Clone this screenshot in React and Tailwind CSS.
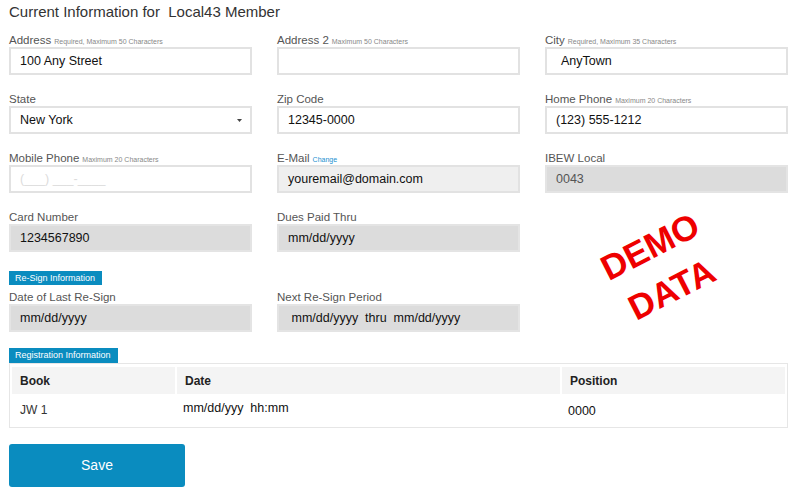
const font = { fontFamily: '"Liberation Sans", Arial, sans-serif' };

function Field({ label, hint, hintBlue, children, labelH = "h-4" }) {
    return (
        <div className="flex flex-col mb-[14px]">
            <div className={`${labelH} flex items-end leading-none text-[11.5px] text-[#555] whitespace-nowrap`}>
                <span>{label}</span>
                {hint && (
                    <span
                        className={`ml-[3px] text-[7px] mb-[1px] ${hintBlue ? "text-[#1a8fd0]" : "text-[#888]"}`}
                    >
                        {hint}
                    </span>
                )}
            </div>
            {children}
        </div>
    );
}

function Box({ children, tone = "white", className = "" }) {
    const tones = {
        white: "bg-white border-[#e2e2e2]",
        light: "bg-[#efefef] border-[#e2e2e2]",
        gray: "bg-[#dcdcdc] border-[#e4e4e4]",
    };
    return (
        <div
            className={`h-[28px] mt-[1px] border-2 flex items-center pl-[9px] text-[12.5px] text-[#111] whitespace-pre ${tones[tone]} ${className}`}
        >
            {children}
        </div>
    );
}

function Badge({ children, className = "" }) {
    return (
        <div
            className={`bg-[#0a8cbf] text-white text-[9px] leading-none whitespace-nowrap flex items-center px-[6px] ${className}`}
        >
            {children}
        </div>
    );
}

export default function App() {
    return (
        <div className="relative w-[800px] h-[499px] bg-white pl-[9px] pr-[12px]" style={font}>
            <div className="h-[30px] pt-[3px] text-[15px] leading-[18px] text-[#333] whitespace-pre">
                Current Information for  Local43 Member
            </div>

            <div className="grid grid-cols-3 gap-x-[25px]">
                <Field label="Address" hint="Required, Maximum 50 Characters">
                    <Box>100 Any Street</Box>
                </Field>
                <Field label="Address 2" hint="Maximum 50 Characters">
                    <Box />
                </Field>
                <Field label="City" hint="Required, Maximum 35 Characters">
                    <Box className="pl-[14px]">AnyTown</Box>
                </Field>

                <Field label="State">
                    <Box className="justify-between pr-[8px]">
                        <span>New York</span>
                        <svg width="5" height="3" viewBox="0 0 5 3">
                            <path d="M0 0h5L2.5 3z" fill="#444" />
                        </svg>
                    </Box>
                </Field>
                <Field label="Zip Code">
                    <Box>12345-0000</Box>
                </Field>
                <Field label="Home Phone" hint="Maximum 20 Characters">
                    <Box>(123) 555-1212</Box>
                </Field>

                <Field label="Mobile Phone" hint="Maximum 20 Characters">
                    <Box className="text-[#dcdcdc] text-[11px]">(___) ___-____</Box>
                </Field>
                <Field label="E-Mail" hint="Change" hintBlue>
                    <Box tone="light">youremail@domain.com</Box>
                </Field>
                <Field label="IBEW Local">
                    <Box tone="gray" className="text-[#555]">0043</Box>
                </Field>

                <Field label="Card Number">
                    <Box tone="gray">1234567890</Box>
                </Field>
                <Field label="Dues Paid Thru">
                    <Box tone="gray">mm/dd/yyyy</Box>
                </Field>
                <div />
            </div>

            <Badge className="w-[93px] h-[14px] mt-[5px]">Re-Sign Information</Badge>
            <div className="grid grid-cols-3 gap-x-[25px]">
                <Field label="Date of Last Re-Sign" labelH="h-[18px]">
                    <Box tone="gray">mm/dd/yyyy</Box>
                </Field>
                <Field label="Next Re-Sign Period" labelH="h-[18px]">
                    <Box tone="gray"> mm/dd/yyyy  thru  mm/dd/yyyy</Box>
                </Field>
                <div />
            </div>

            <Badge className="w-[109px] h-[15px] mt-[2px]">Registration Information</Badge>
            <div className="border border-[#e6e6e6] px-[2px] pt-[3px] pb-[1px]">
                <div className="grid grid-cols-[163px_383px_223px] gap-x-[2px]">
                    {["Book", "Date", "Position"].map((h) => (
                        <div
                            key={h}
                            className="h-[27px] bg-[#f4f4f4] flex items-center pl-[8px] text-[12px] font-bold text-[#222]"
                        >
                            {h}
                        </div>
                    ))}
                    <div className="h-[32px] flex items-center pl-[8px] text-[12px] text-[#333]">JW 1</div>
                    <div className="h-[32px] flex items-center pl-[6px] pb-[3px] text-[12.5px] text-[#111] whitespace-pre">
                        mm/dd/yyy  hh:mm
                    </div>
                    <div className="h-[32px] flex items-center pl-[6px] pt-[2px] text-[12.5px] text-[#111]">0000</div>
                </div>
            </div>

            <button className="mt-[16px] w-[176px] h-[43px] rounded-[3px] bg-[#0a8cbf] text-white text-[14px]">
                Save
            </button>

            <div className="absolute left-[661px] top-[268px] -translate-x-1/2 -translate-y-1/2 -rotate-[27deg] text-center text-[35px] leading-[48px] font-bold text-[#ee0000]">
                <div>DEMO</div>
                <div>DATA</div>
            </div>
        </div>
    );
}
